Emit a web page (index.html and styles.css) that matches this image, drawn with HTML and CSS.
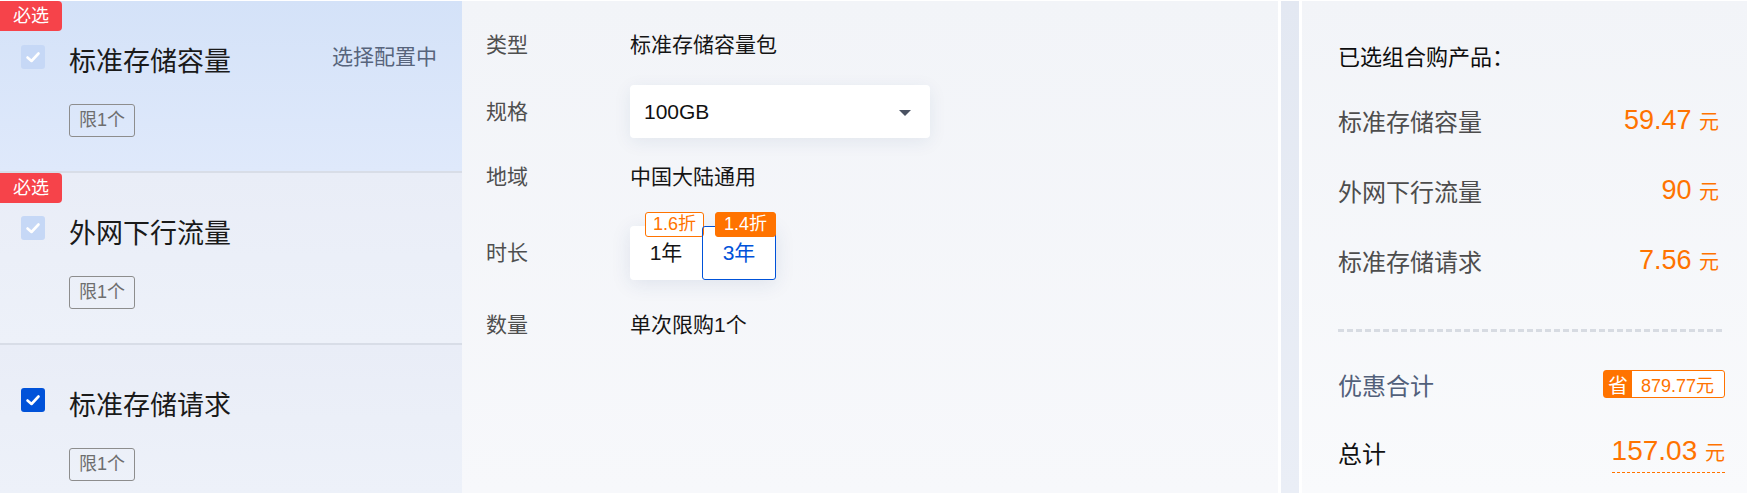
FILE: index.html
```html
<!DOCTYPE html>
<html lang="zh-CN">
<head>
    <meta charset="UTF-8">
    <meta name="viewport" content="width=device-width, initial-scale=1.0">
    <title>组合购</title>
    <link rel="stylesheet" href="styles.css">
</head>
<body>
    <div class="page">
        <aside class="product-list">
            <div class="product active">
                <span class="must">必选</span>
                <div class="product-head">
                    <span class="check disabled">
                        <svg viewBox="0 0 24 24"><polyline points="6.5,12.5 10.5,16 17.5,8.5"/></svg>
                    </span>
                    <span class="product-name">标准存储容量</span>
                    <span class="product-state">选择配置中</span>
                </div>
                <span class="limit">限1个</span>
            </div>
            <div class="product">
                <span class="must">必选</span>
                <div class="product-head">
                    <span class="check disabled">
                        <svg viewBox="0 0 24 24"><polyline points="6.5,12.5 10.5,16 17.5,8.5"/></svg>
                    </span>
                    <span class="product-name">外网下行流量</span>
                </div>
                <span class="limit">限1个</span>
            </div>
            <div class="product last">
                <div class="product-head">
                    <span class="check">
                        <svg viewBox="0 0 24 24"><polyline points="6.5,12.5 10.5,16 17.5,8.5"/></svg>
                    </span>
                    <span class="product-name">标准存储请求</span>
                </div>
                <span class="limit">限1个</span>
            </div>
        </aside>

        <main class="config">
            <div class="config-row row-type">
                <span class="config-label">类型</span>
                <span class="config-value">标准存储容量包</span>
            </div>
            <div class="config-row row-spec">
                <span class="config-label">规格</span>
                <div class="select">
                    <span>100GB</span>
                    <span class="select-arrow"></span>
                </div>
            </div>
            <div class="config-row row-region">
                <span class="config-label">地域</span>
                <span class="config-value">中国大陆通用</span>
            </div>
            <div class="config-row row-time">
                <span class="config-label">时长</span>
                <div class="periods">
                    <div class="period">
                        <span class="discount">1.6折</span>
                        1年
                    </div>
                    <div class="period selected">
                        <span class="discount hot">1.4折</span>
                        3年
                    </div>
                </div>
            </div>
            <div class="config-row row-count">
                <span class="config-label">数量</span>
                <span class="config-value">单次限购1个</span>
            </div>
        </main>

        <div class="split"></div>

        <aside class="summary">
            <h2 class="summary-title">已选组合购产品：</h2>
            <div class="summary-item">
                <span>标准存储容量</span>
                <span class="price">59.47 <small>元</small></span>
            </div>
            <div class="summary-item">
                <span>外网下行流量</span>
                <span class="price">90 <small>元</small></span>
            </div>
            <div class="summary-item">
                <span>标准存储请求</span>
                <span class="price">7.56 <small>元</small></span>
            </div>
            <div class="summary-line"></div>
            <div class="summary-save">
                <span>优惠合计</span>
                <span class="save-tag"><b>省</b>879.77元</span>
            </div>
            <div class="summary-total">
                <span>总计</span>
                <span class="total-price">157.03 <small>元</small></span>
            </div>
        </aside>
    </div>
</body>
</html>
```

FILE: styles.css
```css
body {
    margin: 0;
    background: #ffffff;
    font-family: "Liberation Sans", "Noto Sans CJK SC", sans-serif;
    color: #1b1b1b;
}

.page {
    display: flex;
    height: 493px;
    padding-top: 1px;
    box-sizing: border-box;
}

/* left: product list */
.product-list {
    width: 462px;
    display: flex;
    flex-direction: column;
    background: #ecf0f8;
}

.product {
    position: relative;
    height: 172px;
    padding: 43px 25px 0 21px;
    box-sizing: border-box;
    display: flex;
    flex-direction: column;
    background: linear-gradient(180deg, #e9edf7, #edf1f9);
    border-bottom: 2px solid #d8dde7;
}

.product.active {
    background: linear-gradient(180deg, #d4e2f8, #dfe9fb);
}

.product.last {
    flex: 1;
    border-bottom: none;
}

.must {
    position: absolute;
    top: 0;
    left: 0;
    width: 62px;
    height: 30px;
    line-height: 30px;
    text-align: center;
    font-size: 18px;
    color: #ffffff;
    background: #f6434a;
    border-radius: 0 4px 4px 0;
}

.product-head {
    display: flex;
    align-items: flex-start;
}

.check {
    width: 24px;
    height: 24px;
    border-radius: 3px;
    background: #0052d9;
    margin-right: 24px;
    flex-shrink: 0;
}

.active .check {
    margin-top: 1px;
}

.check.disabled {
    background: #c6d8f6;
}

.check svg {
    width: 24px;
    height: 24px;
    display: block;
}

.check polyline {
    fill: none;
    stroke: #ffffff;
    stroke-width: 2.6;
    stroke-linecap: round;
    stroke-linejoin: round;
}

.product-name {
    margin-top: 2px;
    font-size: 27px;
    line-height: 32px;
    color: #1a1a1a;
}

.product-state {
    margin-left: auto;
    margin-top: 1px;
    font-size: 21px;
    line-height: 24px;
    color: #57647c;
}

.limit {
    align-self: flex-start;
    margin: 26px 0 0 48px;
    height: 33px;
    line-height: 31px;
    padding: 0 9px;
    box-sizing: border-box;
    border: 1px solid #8d8d8d;
    border-radius: 3px;
    font-size: 18px;
    color: #6e6e6e;
}

/* middle: config */
.config {
    width: 816px;
    padding: 32px 24px 0;
    box-sizing: border-box;
    background: linear-gradient(180deg, #f2f4f8, #f7f8fb);
}

.config-row {
    display: flex;
    align-items: center;
    min-height: 24px;
}

.row-spec { margin-top: 28px; }
.row-region { margin-top: 27px; }
.row-time { margin-top: 37px; }
.row-count { margin-top: 33px; }

.config-label {
    width: 144px;
    font-size: 21px;
    line-height: 24px;
    color: #4f4f4f;
}

.config-value {
    font-size: 21px;
    line-height: 24px;
    color: #151515;
}

.select {
    width: 300px;
    height: 53px;
    padding: 0 19px 0 14px;
    box-sizing: border-box;
    display: flex;
    align-items: center;
    justify-content: space-between;
    background: #ffffff;
    border-radius: 4px;
    box-shadow: 0 4px 18px rgba(30, 60, 120, 0.08);
    font-size: 21px;
    color: #111111;
}

.select-arrow {
    width: 0;
    height: 0;
    border-left: 6px solid transparent;
    border-right: 6px solid transparent;
    border-top: 6px solid #4a5262;
    margin-top: 2px;
}

.periods {
    display: flex;
    background: #ffffff;
    border-radius: 4px;
    box-shadow: 0 4px 20px rgba(30, 60, 120, 0.1);
}

.period {
    position: relative;
    width: 72px;
    height: 54px;
    line-height: 54px;
    text-align: center;
    font-size: 21px;
    color: #151515;
    box-sizing: border-box;
}

.period.selected {
    width: 74px;
    line-height: 52px;
    border: 1px solid #0052d9;
    border-radius: 3px;
    color: #0052d9;
}

.discount {
    position: absolute;
    top: -14px;
    left: 15px;
    height: 25px;
    line-height: 23px;
    padding: 0 7px;
    box-sizing: border-box;
    border: 1px solid #ff7300;
    border-radius: 3px;
    background: #ffffff;
    color: #ff7300;
    font-size: 18px;
    white-space: nowrap;
}

.period.selected .discount {
    top: -15px;
    left: auto;
    right: -1px;
    padding: 0 8px;
}

.discount.hot {
    background: #ff7300;
    color: #ffffff;
}

/* the narrow band between panels */
.split {
    width: 18px;
    margin: 0 3px;
    background: linear-gradient(180deg, #e3e8f2, #eaeef6);
}

/* right: summary */
.summary {
    flex: 1;
    padding: 45px 22px 0 36px;
    background: linear-gradient(180deg, #f2f4f8, #f9fafc);
}

.summary-title {
    margin: 0 0 15px;
    font-size: 22px;
    line-height: 24px;
    font-weight: normal;
    color: #0d0d0d;
}

.summary-item {
    height: 70px;
    display: flex;
    align-items: center;
    justify-content: space-between;
    font-size: 24px;
    color: #4d4d4d;
}

.price {
    padding-right: 6px;
    font-size: 27px;
    color: #ff7300;
}

.price small,
.total-price small {
    font-size: 20px;
}

.summary-line {
    margin-top: 34px;
    height: 3px;
    background: repeating-linear-gradient(90deg, #d7dbe2 0 6px, transparent 6px 9px);
}

.summary-save {
    margin-top: 27px;
    height: 50px;
    display: flex;
    align-items: center;
    justify-content: space-between;
    font-size: 24px;
    color: #52607a;
}

.save-tag {
    display: flex;
    align-items: center;
    height: 28px;
    box-sizing: border-box;
    border: 1px solid #ff7300;
    border-radius: 3px;
    padding-right: 10px;
    font-size: 18px;
    color: #ff7300;
    background: #ffffff;
}

.save-tag b {
    width: 28px;
    height: 100%;
    margin-right: 9px;
    display: flex;
    align-items: center;
    justify-content: center;
    font-weight: normal;
    font-size: 20px;
    color: #ffffff;
    background: #ff7300;
}

.summary-total {
    margin-top: 23px;
    display: flex;
    align-items: center;
    justify-content: space-between;
    font-size: 24px;
    color: #111111;
}

.total-price {
    font-size: 28px;
    line-height: 38px;
    color: #ff7300;
    border-bottom: 1px dashed #ff7300;
}
```
